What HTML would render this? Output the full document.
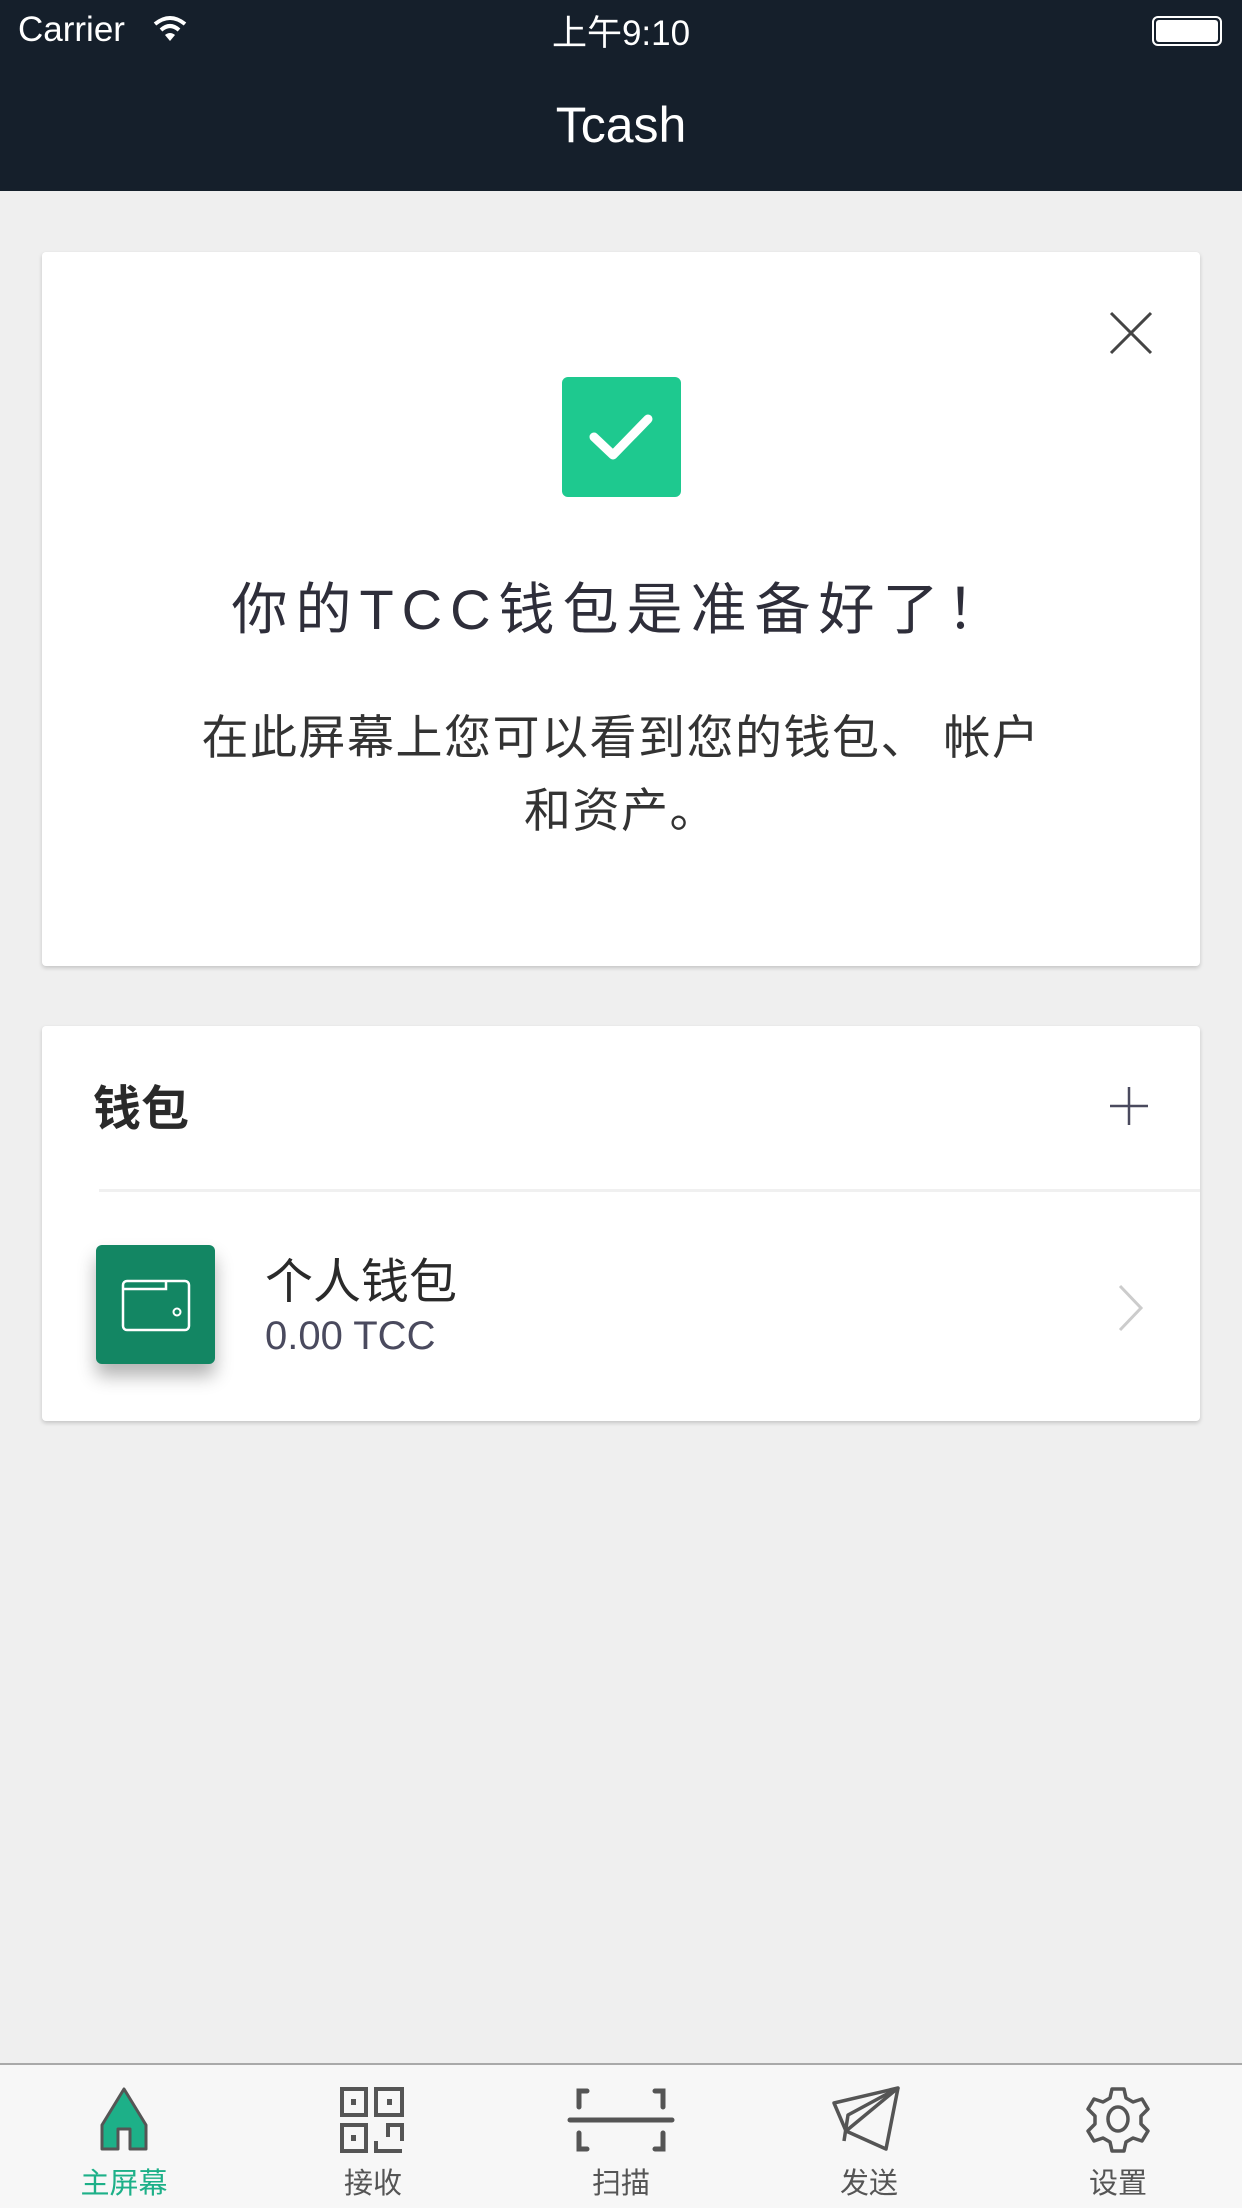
<!DOCTYPE html>
<html><head><meta charset="utf-8"><style>
*{margin:0;padding:0;box-sizing:border-box}
body{width:1242px;height:2208px;background:#efefef;font-family:"Liberation Sans","Noto Sans CJK SC",sans-serif;position:relative;overflow:hidden}
.abs{position:absolute}
.hdr{left:0;top:0;width:1242px;height:191px;background:#151f2b;color:#fff}
.card{background:#fff;border-radius:4px;box-shadow:0 2px 4px rgba(0,0,0,.18)}
.tab{position:absolute;top:2063px;left:0;width:1242px;height:145px;background:#f7f7f7;border-top:2px solid #a9a9a9}
.lbl{position:absolute;top:2160px;width:200px;text-align:center;font-size:29px;color:#555}
</style></head><body>
<div class="abs hdr">
  <div class="abs" style="left:18px;top:10px;font-size:35px">Carrier</div>
  <svg class="abs" style="left:152px;top:14px" width="36" height="30" viewBox="0 0 36 30"><path d="M3 10 Q18 -2 33 10" stroke="#fff" stroke-width="4" fill="none"/><path d="M9 16 Q18 8 27 16" stroke="#fff" stroke-width="4" fill="none"/><path d="M18 27 L13 21 Q18 17 23 21Z" fill="#fff"/></svg>
  <div class="abs" style="left:0;width:1242px;text-align:center;top:5px;font-size:35px">上午9:10</div>
  <div class="abs" style="left:1152px;top:16px;width:70px;height:30px;border:2px solid #fff;border-radius:6px;padding:2px"><div style="width:100%;height:100%;background:#fff;border-radius:3px"></div></div>
  <div class="abs" style="left:0;width:1242px;text-align:center;top:96px;font-size:50px">Tcash</div>
</div>

<div class="abs card" style="left:42px;top:252px;width:1158px;height:714px">
  <svg class="abs" style="left:1067px;top:59px" width="44" height="44" viewBox="0 0 44 44"><path d="M2 2L42 42M42 2L2 42" stroke="#444" stroke-width="3"/></svg>
  <div class="abs" style="left:520px;top:125px;width:119px;height:120px;background:#1ec98f;border-radius:6px">
    <svg width="119" height="120" viewBox="0 0 119 120"><path d="M32 60 L51 78 L86 42" stroke="#fff" stroke-width="9" fill="none" stroke-linecap="round" stroke-linejoin="round"/></svg>
  </div>
  <div class="abs" style="left:0;width:1158px;text-align:center;top:313px;font-size:56px;color:#2e2e3a;letter-spacing:8px">你的TCC钱包是准备好了！</div>
  <div class="abs" style="left:0;width:1158px;text-align:center;top:449px;font-size:47px;line-height:73px;color:#333;letter-spacing:1.5px">在此屏幕上您可以看到您的钱包、 帐户<br>和资产。</div>
</div>

<div class="abs card" style="left:42px;top:1026px;width:1158px;height:395px">
  <div class="abs" style="left:51px;top:43px;font-size:48px;color:#2a2a2a;font-weight:bold">钱包</div>
  <svg class="abs" style="left:1068px;top:61px" width="38" height="38" viewBox="0 0 38 38"><path d="M19 0V38M0 19H38" stroke="#4a4a5e" stroke-width="2.5"/></svg>
  <div class="abs" style="left:57px;top:163px;width:1101px;height:3px;background:#f0f0f0"></div>
  <div class="abs" style="left:54px;top:219px;width:119px;height:119px;background:#138663;border-radius:6px;box-shadow:0 12px 18px rgba(0,0,0,.3)">
    <svg width="119" height="119" viewBox="0 0 119 119"><rect x="27" y="36" width="66" height="49" rx="4" fill="none" stroke="#fff" stroke-width="2.5"/><path d="M27 44H70V36" fill="none" stroke="#fff" stroke-width="2.5"/><circle cx="81" cy="67" r="3.5" fill="none" stroke="#fff" stroke-width="2"/></svg>
  </div>
  <div class="abs" style="left:223px;top:216px;font-size:48px;color:#2a2a2a">个人钱包</div>
  <div class="abs" style="left:223px;top:288px;font-size:40px;color:#4a4a5e">0.00 TCC</div>
  <svg class="abs" style="left:1076px;top:258px" width="26" height="48" viewBox="0 0 26 48"><path d="M2 2L23 24L2 46" stroke="#ccc" stroke-width="3" fill="none"/></svg>
</div>

<div class="tab">
  <svg class="abs" style="left:94px;top:20px" width="60" height="68" viewBox="0 0 60 68"><path d="M30 4 L52 40 V64 H36 V44 H24 V64 H8 V40 Z" fill="#1db088" stroke="#555" stroke-width="3" stroke-linejoin="round"/></svg>
  <svg class="abs" style="left:340px;top:22px" width="66" height="66" viewBox="0 0 66 66"><g fill="none" stroke="#555" stroke-width="4"><rect x="2" y="2" width="24" height="26"/><rect x="36" y="2" width="26" height="26"/><rect x="2" y="38" width="24" height="26"/></g><g fill="#555"><rect x="11" y="12" width="5" height="6"/><rect x="47" y="12" width="5" height="6"/><rect x="11" y="48" width="5" height="6"/></g><path d="M36 54V64H62M48 50V38H62V54" fill="none" stroke="#555" stroke-width="4"/></svg>
  <svg class="abs" style="left:567px;top:22px" width="108" height="66" viewBox="0 0 108 66"><g fill="none" stroke="#555" stroke-width="5" stroke-linecap="round"><path d="M12 20V4H20M88 4H96V20M12 46V62H20M88 62H96V46"/><path d="M3 33H105"/></g></svg>
  <svg class="abs" style="left:830px;top:20px" width="72" height="70" viewBox="0 0 72 70"><g fill="none" stroke="#555" stroke-width="3.5" stroke-linejoin="round"><path d="M68 3 L4 18 L16 46 Z"/><path d="M68 3 L56 64 L16 46"/><path d="M68 3 L18 30 L14 56"/></g></svg>
  <svg class="abs" style="left:1084px;top:20px" width="68" height="68" viewBox="0 0 68 68"><path d="M28 4h12l2 9 7 4 9-3 6 10-7 7v8l7 7-6 10-9-3-7 4-2 9H28l-2-9-7-4-9 3-6-10 7-7v-8l-7-7 6-10 9 3 7-4z" fill="none" stroke="#555" stroke-width="3.5" stroke-linejoin="round"/><ellipse cx="34" cy="34" rx="10" ry="12" fill="none" stroke="#555" stroke-width="3.5"/></svg>
  <div class="lbl" style="left:24px;top:95px;color:#1db088">主屏幕</div>
  <div class="lbl" style="left:273px;top:95px">接收</div>
  <div class="lbl" style="left:521px;top:95px">扫描</div>
  <div class="lbl" style="left:769px;top:95px">发送</div>
  <div class="lbl" style="left:1018px;top:95px">设置</div>
</div>
</body></html>
